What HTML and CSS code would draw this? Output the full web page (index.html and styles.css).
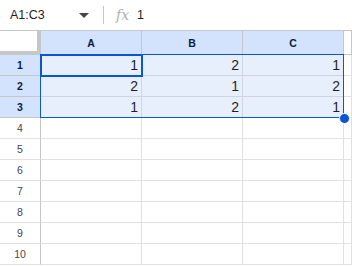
FILE: index.html
```html
<!DOCTYPE html>
<html>
<head>
  <title>Sheet</title>
  <link rel="stylesheet" href="styles.css">
</head>
<body>
  <div class="toolbar">
    <div class="name-box">
      <span class="range-name">A1:C3</span>
      <svg class="caret" width="10" height="5" viewBox="0 0 10 5"><path d="M0 0h10L5 5z" fill="#444746"/></svg>
    </div>
    <div class="divider"></div>
    <span class="fx">fx</span>
    <span class="formula">1</span>
  </div>

  <div class="sheet">
    <div class="grid">
      <div class="corner"></div>
      <div class="col-head on">A</div>
      <div class="col-head on">B</div>
      <div class="col-head on">C</div>
      <div class="col-head"></div>

      <div class="row-head on">1</div>
      <div class="cell sel">1</div>
      <div class="cell sel">2</div>
      <div class="cell sel">1</div>
      <div class="cell"></div>

      <div class="row-head on">2</div>
      <div class="cell sel">2</div>
      <div class="cell sel">1</div>
      <div class="cell sel">2</div>
      <div class="cell"></div>

      <div class="row-head on">3</div>
      <div class="cell sel">1</div>
      <div class="cell sel">2</div>
      <div class="cell sel">1</div>
      <div class="cell"></div>

      <div class="row-head">4</div><div class="cell"></div><div class="cell"></div><div class="cell"></div><div class="cell"></div>
      <div class="row-head">5</div><div class="cell"></div><div class="cell"></div><div class="cell"></div><div class="cell"></div>
      <div class="row-head">6</div><div class="cell"></div><div class="cell"></div><div class="cell"></div><div class="cell"></div>
      <div class="row-head">7</div><div class="cell"></div><div class="cell"></div><div class="cell"></div><div class="cell"></div>
      <div class="row-head">8</div><div class="cell"></div><div class="cell"></div><div class="cell"></div><div class="cell"></div>
      <div class="row-head">9</div><div class="cell"></div><div class="cell"></div><div class="cell"></div><div class="cell"></div>
      <div class="row-head">10</div><div class="cell"></div><div class="cell"></div><div class="cell"></div><div class="cell"></div>
    </div>

    <div class="range"></div>
    <div class="active"></div>
    <div class="handle"></div>
  </div>
</body>
</html>
```

FILE: styles.css
```css
body {
  margin: 0;
  font-family: "Liberation Sans", Arial, sans-serif;
  background: #fff;
  color: #1f1f1f;
  overflow: hidden;
}

.toolbar {
  display: flex;
  align-items: center;
  height: 30px;
  border-bottom: 1px solid #c7c7c7;
  background: #fff;
}

.name-box {
  display: flex;
  align-items: center;
  width: 93px;
  padding-left: 10px;
  box-sizing: border-box;
}

.range-name {
  font-size: 12.5px;
  color: #1f1f1f;
  flex-grow: 1;
}

.caret {
  margin-right: 4px;
}

.divider {
  width: 1px;
  height: 18px;
  margin: 0 10px;
  background: #c7c7c7;
}

.fx {
  font-family: "DejaVu Serif", serif;
  font-style: italic;
  font-size: 14px;
  color: #b0b0b0;
  margin-left: 2px;
  margin-right: 8px;
}

.formula {
  font-size: 12.5px;
  color: #1f1f1f;
}

.sheet {
  position: relative;
}

.grid {
  display: grid;
  grid-template-columns: 41px 101px 101px 101px 1fr;
  grid-template-rows: 24px repeat(10, 21px);
}

.grid > div {
  box-sizing: border-box;
  border-right: 1px solid #e1e1e1;
  border-bottom: 1px solid #e1e1e1;
}

.grid > .corner {
  background: #fff;
  border-right: 4px solid #c4c7c5;
  border-bottom: 4px solid #c4c7c5;
}

.grid > .col-head {
  display: flex;
  align-items: center;
  justify-content: center;
  font-size: 10.5px;
  font-weight: bold;
  color: #1f1f1f;
  background: #fff;
  border-right-color: #c4c7c5;
  border-bottom-color: #c4c7c5;
}

.grid > .row-head {
  display: flex;
  align-items: center;
  justify-content: center;
  font-size: 10.5px;
  color: #444746;
  background: #fff;
  border-right-color: #c4c7c5;
  border-bottom-color: #e1e1e1;
}

.grid > .on {
  background: #d3e3fd;
  color: #0b1b3f;
  font-weight: bold;
}

.grid > .row-head.on {
  border-bottom-color: #c4c7c5;
}

.cell {
  display: flex;
  align-items: center;
  justify-content: flex-end;
  padding-right: 3px;
  font-size: 14px;
}

.grid > .sel {
  background: #e7effd;
  border-right-color: #cfd6e1;
  border-bottom-color: #cfd6e1;
}

.range {
  position: absolute;
  left: 40px;
  top: 23px;
  width: 304px;
  height: 64px;
  border: 1px solid #0b57d0;
  box-sizing: border-box;
}

.active {
  position: absolute;
  left: 40px;
  top: 23px;
  width: 103px;
  height: 23px;
  border: 2px solid #0b57d0;
  box-sizing: border-box;
}

.handle {
  position: absolute;
  left: 339px;
  top: 82px;
  width: 9px;
  height: 9px;
  border-radius: 50%;
  background: #0b57d0;
  border: 1px solid #fff;
}
```
